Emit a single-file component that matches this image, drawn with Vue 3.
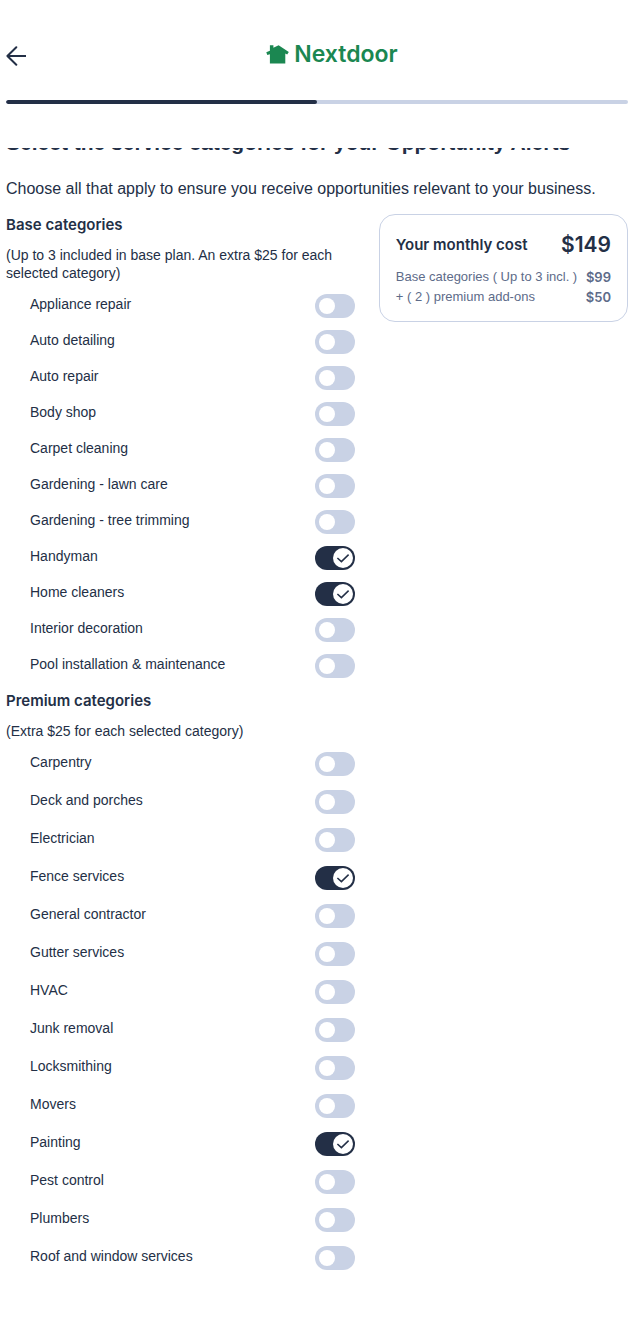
<script setup>
import { computed, reactive } from 'vue'

const toItems = (names, selected) =>
  names.map((name) => ({
    name,
    id: name.toLowerCase().replace(/[^a-z]+/g, '-'),
    on: selected.includes(name),
  }))

const groups = reactive([
  {
    key: 'base',
    title: 'Base categories',
    note: '(Up to 3 included in base plan. An extra $25 for each selected category)',
    items: toItems(
      [
        'Appliance repair',
        'Auto detailing',
        'Auto repair',
        'Body shop',
        'Carpet cleaning',
        'Gardening - lawn care',
        'Gardening - tree trimming',
        'Handyman',
        'Home cleaners',
        'Interior decoration',
        'Pool installation & maintenance',
      ],
      ['Handyman', 'Home cleaners'],
    ),
  },
  {
    key: 'premium',
    title: 'Premium categories',
    note: '(Extra $25 for each selected category)',
    items: toItems(
      [
        'Carpentry',
        'Deck and porches',
        'Electrician',
        'Fence services',
        'General contractor',
        'Gutter services',
        'HVAC',
        'Junk removal',
        'Locksmithing',
        'Movers',
        'Painting',
        'Pest control',
        'Plumbers',
        'Roof and window services',
      ],
      ['Fence services', 'Painting'],
    ),
  },
])

const count = (group) => group.items.filter((item) => item.on).length
const baseCost = computed(() => 99 + 25 * Math.max(0, count(groups[0]) - 3))
const addOns = computed(() => count(groups[1]))
const addOnCost = computed(() => addOns.value * 25)
</script>

<template>
  <div class="page">
    <header class="header">
      <div class="bar">
        <button class="back" type="button" aria-label="Back">
          <svg viewBox="0 0 20 20" width="20" height="20" aria-hidden="true">
            <path d="M10.3 1.2 1.4 10l8.9 8.8M1.4 10H19.6" />
          </svg>
        </button>
        <a class="brand" href="#">
          <svg viewBox="0 0 23 19" width="23" height="19" aria-hidden="true">
            <path d="M3.9.3h3.5v2.4L12.6.3 22.8 7l-1.6 2.5-1.9-1v9.9H3.9V9.2l-2.6.8L.3 7.2l3.6-1.5z" />
          </svg>
          <span>Nextdoor</span>
        </a>
      </div>
      <div class="progress" role="progressbar" aria-label="Progress" aria-valuenow="50" aria-valuemin="0" aria-valuemax="100">
        <div class="progress-fill"></div>
      </div>
    </header>

    <main class="content">
      <h1>Select the service categories for your Opportunity Alerts</h1>
      <p class="intro">Choose all that apply to ensure you receive opportunities relevant to your business.</p>

      <div class="columns">
        <div class="groups">
          <section v-for="group in groups" :key="group.key" :class="['group', group.key]">
            <h2>{{ group.title }}</h2>
            <p class="note">{{ group.note }}</p>
            <ul>
              <li v-for="item in group.items" :key="item.id">
                <label :for="item.id">{{ item.name }}</label>
                <span class="switch">
                  <input :id="item.id" v-model="item.on" type="checkbox" role="switch" />
                  <svg v-if="item.on" viewBox="0 0 20 20" width="20" height="20" aria-hidden="true">
                    <path d="m4.4 10 4 3.6 7.2-7" />
                  </svg>
                </span>
              </li>
            </ul>
          </section>
        </div>

        <aside class="card">
          <div class="total">
            <h2>Your monthly cost</h2>
            <strong>${{ baseCost + addOnCost }}</strong>
          </div>
          <div class="line">
            <span>Base categories ( Up to 3 incl. )</span>
            <b>${{ baseCost }}</b>
          </div>
          <div class="line">
            <span>+ ( {{ addOns }} ) premium add-ons</span>
            <b>${{ addOnCost }}</b>
          </div>
        </aside>
      </div>
    </main>
  </div>
</template>

<style>
body {
  background: #fff;
}
</style>

<style scoped>
.page {
  padding: 0 6px 68px;
  color: #232f46;
  font-family: "Liberation Sans", Arial, sans-serif;
  font-size: 14px;
  line-height: 20px;
}

h1,
h2,
p,
ul {
  margin: 0;
  padding: 0;
}

.header {
  padding: 40px 0 44px;
}

.bar {
  display: grid;
  grid-template-columns: 1fr auto 1fr;
  align-items: center;
  height: 32px;
}

.back {
  display: flex;
  width: 20px;
  padding: 0;
  border: 0;
  background: none;
  cursor: pointer;
}

.back path {
  fill: none;
  stroke: #232f46;
  stroke-width: 2;
  stroke-linecap: round;
  stroke-linejoin: round;
}

.brand {
  display: flex;
  align-items: center;
  gap: 5px;
  padding-bottom: 4px;
  padding-left: 30px;
  color: #1b8751;
  font-family: Inter, sans-serif;
  font-size: 23px;
  font-weight: 600;
  line-height: 28px;
  text-decoration: none;
}

.brand path {
  fill: #1b8751;
}

.progress {
  height: 4px;
  margin-top: 28px;
  overflow: hidden;
  border-radius: 2px;
  background: #c9d2e5;
}

.progress-fill {
  width: 50%;
  height: 100%;
  border-radius: 2px;
  background: #232f46;
}

.content {
  overflow: hidden;
}

h1 {
  margin-top: -19px;
  font-size: 21px;
  font-weight: 700;
  line-height: 28px;
  white-space: nowrap;
}

.intro {
  margin: 20px 0 12px;
  font-size: 16px;
  line-height: 24px;
}

.columns {
  display: grid;
  grid-template-columns: minmax(0, 7fr) minmax(0, 5fr);
  gap: 24px;
  align-items: start;
}

h2 {
  font-family: Inter, sans-serif;
  font-size: 15px;
  font-weight: 600;
  line-height: 24px;
}

.note {
  margin: 9px 0 12px;
  font-size: 14px;
  line-height: 18px;
}

.group + .group {
  margin-top: 11px;
}

ul {
  display: grid;
  gap: 12px;
  list-style: none;
}

.premium ul {
  gap: 14px;
}

li {
  display: flex;
  justify-content: space-between;
  height: 24px;
  padding-left: 24px;
}

.switch {
  position: relative;
  display: flex;
}

.switch input {
  width: 40px;
  height: 24px;
  margin: 0;
  padding: 4px;
  border-radius: 12px;
  background: #c9d2e5;
  appearance: none;
  cursor: pointer;
}

.switch input::before {
  display: block;
  width: 16px;
  height: 16px;
  border-radius: 50%;
  background: #fff;
  content: "";
}

.switch input:checked {
  padding: 2px;
  background: #232f46;
}

.switch input:checked::before {
  width: 20px;
  height: 20px;
  margin-left: auto;
}

.switch svg {
  position: absolute;
  top: 2px;
  right: 2px;
  pointer-events: none;
}

.switch path {
  fill: none;
  stroke: #232f46;
  stroke-width: 1.5;
}

.card {
  margin-top: 1px;
  padding: 16px 16px 14px;
  border: 1px solid #c9d2e5;
  border-radius: 16px;
}

.total,
.line {
  display: flex;
  align-items: center;
  justify-content: space-between;
  white-space: nowrap;
}

.total {
  height: 28px;
  margin-bottom: 8px;
}

.total strong {
  font-family: Inter, sans-serif;
  font-size: 21px;
  font-weight: 600;
}

.line {
  color: #5d6b89;
  font-size: 13px;
}

.line b {
  font-family: Inter, sans-serif;
  font-weight: 600;
}
</style>
